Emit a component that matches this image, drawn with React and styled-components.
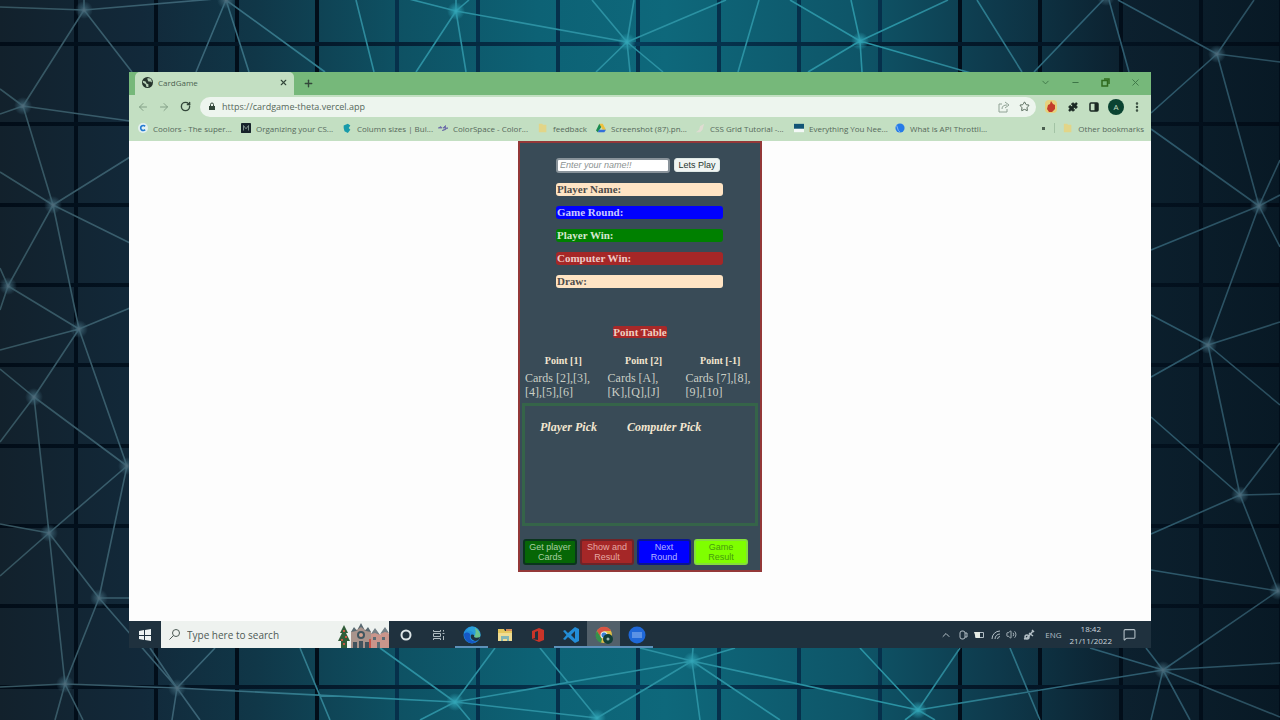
import React from "react";
import styled, { createGlobalStyle } from "styled-components";
import {
  ArrowLeft, ArrowRight, RotateCw, Lock, X, Plus, ChevronDown, ChevronUp, Minus, Copy,
  Star, Puzzle, EllipsisVertical, Search, MessageSquare, Volume2,
} from "lucide-react";

const Global = createGlobalStyle`
  * { box-sizing: border-box; }
  body { margin: 0; background: #0b1f2e; font-family: "Open Sans", "Noto Sans", sans-serif; }
  button, input { font-family: inherit; }
  button { cursor: pointer; }
`;

/* ---------- backdrop ---------- */

const Page = styled.div`
  position: relative;
  display: flex;
  flex-direction: column;
  min-height: 100vh;
  padding: 72px 129px;
`;

const BackdropSvg = styled.svg`
  position: absolute;
  inset: 0;
  width: 100%;
  height: 100%;
`;

const NODES = [
  [84, 10], [23, 106], [53, 205], [8, 286], [79, 329], [34, 397], [127, 466], [49, 533], [99, 598], [65, 684],
  [226, 0], [456, 11], [627, 42], [860, 41], [1106, -3], [1217, 54], [1259, 206], [1208, 345], [1240, 495],
  [1278, 591], [1163, 670], [177, 688], [455, 702], [692, 661], [597, 718], [918, 710],
];

const LINKS =
  "M84 10L0 7M84 10L226 -2M84 10V0M84 10L23 106M84 10L132 72M23 106L0 89M23 106L0 114M23 106L130 121M23 106L53 205" +
  "M53 205L0 172M53 205L130 157M53 205L130 243M53 205L8 286M53 205L79 329M8 286L0 268M8 286L0 310M8 286L79 329" +
  "M79 329L0 350M79 329L130 308M79 329L34 397M79 329L127 466M34 397L0 369M34 397L0 442M34 397L127 466M34 397L49 533" +
  "M127 466L49 533M127 466L99 598M49 533L0 524M49 533L0 576M49 533L99 598M49 533L65 684M99 598H130M99 598L65 684" +
  "M99 598L177 688M65 684L0 687M65 684L55 720M65 684L83 720M65 684L177 688" +
  "M226 0L196 72M226 0L249 72M226 0L325 72M356 0L374 72M456 11L409 -1M456 11L469 0M456 11V0M456 11L416 72M456 11L466 72" +
  "M456 11L627 42M627 42L592 0M627 42L634 0M627 42L596 72M627 42L630 72M627 42L726 0M627 42L663 72M759 0L738 72" +
  "M860 41L790 0M860 41L851 0M860 41L948 0M860 41L808 72M860 41L862 72M860 41L995 80M977 0L1022 72M1106 -3L1034 72" +
  "M1109 0L1129 72M1217 54L1118 0M1217 54L1254 0M1217 54L1280 62M1217 54L1151 113M1217 54L1259 206M1151 129L1259 206" +
  "M1259 206L1280 160M1259 206L1280 195M1259 206L1280 247M1259 206L1151 250M1259 206L1208 345M1208 345L1280 322" +
  "M1208 345L1280 405M1208 345L1151 315M1208 345L1151 377M1208 345L1240 495M1240 495L1280 443M1240 495L1280 494" +
  "M1240 495L1151 534M1240 495L1278 591M1240 495L1151 417M1278 591L1151 570M1278 591L1163 670M1163 670L1280 663" +
  "M1163 670L1280 717M1163 670L1146 648M1163 670L1151 720M1163 670L1190 720M1163 670L918 710M1163 670L1090 648" +
  "M177 688L150 648M177 688L215 648M177 688L172 720M177 688L200 720M177 688L455 702M455 702L380 648M455 702L495 648" +
  "M455 702L420 720M455 702L470 720M455 702L597 718M455 702L692 661M597 718L540 648M692 661L597 718M692 661L640 648" +
  "M692 661L693 648M692 661L735 648M692 661L700 720M692 661L780 720M692 661L918 710M918 710L860 648M918 710L960 648" +
  "M918 710L905 720M918 710L935 720M300 648L330 720M1010 648L1040 720";

const grid = (from, count) => Array.from({ length: count }, (_, i) => Math.round(from + i * 80.35));

function Backdrop() {
  return (
    <BackdropSvg viewBox="0 0 1280 720" preserveAspectRatio="xMidYMid slice" aria-hidden="true">
      <defs>
        <linearGradient id="base">
          <stop offset="0" stopColor="#12212c" />
          <stop offset="0.11" stopColor="#12293a" />
          <stop offset="0.2" stopColor="#103748" />
          <stop offset="0.31" stopColor="#0e5163" />
          <stop offset="0.42" stopColor="#0d6275" />
          <stop offset="0.52" stopColor="#0e687b" />
          <stop offset="0.67" stopColor="#0e5568" />
          <stop offset="0.78" stopColor="#0e394b" />
          <stop offset="0.88" stopColor="#0c202e" />
          <stop offset="1" stopColor="#081925" />
        </linearGradient>
        <linearGradient id="seam">
          <stop offset="0" stopColor="#020d18" />
          <stop offset="0.25" stopColor="#04192a" />
          <stop offset="0.5" stopColor="#063b58" />
          <stop offset="0.75" stopColor="#04192a" />
          <stop offset="1" stopColor="#020c17" />
        </linearGradient>
        <linearGradient id="wire" gradientUnits="userSpaceOnUse" x1="0" x2="1280">
          <stop offset="0" stopColor="#35545f" />
          <stop offset="0.15" stopColor="#3b6375" />
          <stop offset="0.3" stopColor="#2c8fa1" />
          <stop offset="0.7" stopColor="#2a93a4" />
          <stop offset="0.85" stopColor="#2f6074" />
          <stop offset="1" stopColor="#2a4d5d" />
        </linearGradient>
        <radialGradient id="glowEdge">
          <stop offset="0" stopColor="#55707f" stopOpacity="0.95" />
          <stop offset="0.4" stopColor="#3d6475" stopOpacity="0.6" />
          <stop offset="1" stopColor="#3d6475" stopOpacity="0" />
        </radialGradient>
        <radialGradient id="glowMid">
          <stop offset="0" stopColor="#35a9ba" />
          <stop offset="0.4" stopColor="#2a98aa" stopOpacity="0.7" />
          <stop offset="1" stopColor="#2a98aa" stopOpacity="0" />
        </radialGradient>
      </defs>
      <rect width="1280" height="720" fill="url(#base)" />
      {grid(76, 16).map((x) => <rect key={x} x={x - 2} y="0" width="4" height="720" fill={x > 350 && x < 930 ? "#06304b" : "#020e1a"} />)}
      {grid(44, 9).map((y) => <rect key={y} x="0" y={y - 2} width="1280" height="4" fill="url(#seam)" />)}
      <path d={LINKS} stroke="url(#wire)" strokeWidth="1.6" fill="none" />
      {NODES.map(([x, y]) => <circle key={x} cx={x} cy={y} r="9" fill={x > 350 && x < 1000 ? "url(#glowMid)" : "url(#glowEdge)"} />)}
    </BackdropSvg>
  );
}

/* ---------- browser ---------- */

const Desktop = styled.main`
  position: relative;
  flex: 1;
  display: flex;
  flex-direction: column;
`;

const IconButton = styled.button`
  display: grid;
  place-items: center;
  width: ${(p) => p.$w || 16}px;
  height: 16px;
  padding: 0;
  border: 0;
  background: none;
  color: ${(p) => p.$color || "#33473a"};
`;

const TabStrip = styled.div`
  display: flex;
  align-items: stretch;
  height: 23px;
  padding-left: 6px;
  background: #76b87a;
`;

const Tab = styled.div`
  display: flex;
  align-items: center;
  gap: 5px;
  width: 159px;
  padding: 0 3px 2px 7px;
  border-radius: 5px 5px 0 0;
  background: #c3dfc2;
  color: #4b5f50;
  font-size: 8px;
  span { flex: 1; }
`;

const WindowButtons = styled.div`
  display: flex;
  align-items: center;
  gap: 14px;
  margin-left: auto;
  padding: 0 8px 2px 0;
`;

const NewTab = styled(IconButton)`
  align-self: center;
  margin-left: 6px;
`;

const Toolbar = styled.div`
  display: flex;
  align-items: center;
  gap: 5px;
  height: 23px;
  padding: 0 6px;
  background: #c3dfc2;
`;

const AddressBar = styled.label`
  flex: 1;
  display: flex;
  align-items: center;
  gap: 6px;
  height: 20px;
  margin-left: 2px;
  padding: 0 4px 0 8px;
  border-radius: 10px;
  background: #edf5ee;
  color: #33473a;
`;

const Address = styled.input`
  flex: 1;
  min-width: 0;
  padding: 0;
  border: 0;
  outline: 0;
  background: none;
  color: #55685b;
  font-size: 9px;
`;

const Bookmarks = styled.nav`
  display: flex;
  align-items: center;
  height: 23px;
  padding: 0 7px 3px 9px;
  background: #c3dfc2;
`;

const Bookmark = styled.a`
  display: flex;
  align-items: center;
  gap: 5px;
  width: ${(p) => (p.$w ? `${p.$w}px` : "auto")};
  color: #56695b;
  font-size: 8px;
  text-decoration: none;
  white-space: nowrap;
  svg { flex: none; }
`;

const Overflow = styled.div`
  display: flex;
  align-items: center;
  gap: 8px;
  margin-left: auto;
`;

const Divider = styled.span`
  width: 1px;
  height: 10px;
  background: #a3c3a5;
`;

const Viewport = styled.section`
  flex: 1;
  display: flex;
  justify-content: center;
  align-items: flex-start;
  background: #fdfdfd;
`;

const Folder = () => <path d="M1 1h4l1 1h4v9H1z" fill="#e2d588" />;

const BOOKMARKS = [
  ["Coolors - The super...", 103, <><circle cx="6" cy="6" r="6" fill="#e4f1f0" /><path d="M8.500 4A3 3 0 1 0 8.500 8" stroke="#247bd2" strokeWidth="2" fill="none" /></>],
  ["Organizing your CS...", 101, <><rect width="12" height="12" rx="1" fill="#17232b" /><path d="M3 9V3l3 4 3-4v6" stroke="#8ea19b" fill="none" /></>],
  ["Column sizes | Bul...", 96, <path d="M2 3l5-2 3 2-2 3 2 2-3 4-4-2-1-4z" fill="#189baa" />],
  ["ColorSpace - Color...", 100, <><path d="M0 6h5l-2-2M12 6H6l3-3v5L5 9z" fill="#6d6da8" stroke="#6d6da8" /></>],
  ["feedback", 58, <Folder />],
  ["Screenshot (87).pn...", 99, <><path d="M4 1L0 9l2 2 5-7z" fill="#198b50" /><path d="M4 1h4l4 7H8z" fill="#ecc13f" /><path d="M2 11l2-3h8l-2 3z" fill="#326fda" /></>],
  ["CSS Grid Tutorial -...", 99, <path d="M1 11l4-3 1-4 5-3-2 7-3 3z" fill="#dfdcd2" />],
  ["Everything You Nee...", 101, <><path d="M0 1h12v6H0z" fill="#125476" /><path d="M0 7h12v4H0z" fill="#f3f8f6" /></>],
  ["What is API Throttli...", 0, <><circle cx="6" cy="6" r="5.500" fill="#267be8" /><path d="M2 3l2 6 2 2" stroke="#9cc6f4" fill="none" /></>],
];

/* ---------- game ---------- */

const Game = styled.article`
  width: 244px;
  padding: 14px 2px 5px;
  border: 2px solid #943838;
  background: #394b57;
  color: #f3e6d0;
  font-family: "Liberation Serif", serif;
`;

const GameTop = styled.div`
  display: flex;
  flex-direction: column;
  gap: 10px;
  padding: 0 34px;
`;

const NameForm = styled.form`
  display: flex;
  align-items: center;
  gap: 4px;
  height: 16px;
`;

const NameInput = styled.input`
  width: 114px;
  height: 15px;
  padding: 0 2px;
  border: 2px solid #89939a;
  border-radius: 3px;
  background: #fff;
  font: 9px "Liberation Sans", sans-serif;
  &::placeholder { color: #8b9291; font-style: italic; }
`;

const PlayButton = styled.button`
  width: 46px;
  height: 14px;
  padding: 0;
  border: 1px solid #dfe8e5;
  border-radius: 3px;
  background: #f0f5f3;
  color: #26352f;
  font: 9px "Liberation Sans", sans-serif;
`;

const Score = styled.div`
  width: 167px;
  height: 13px;
  padding-left: 1px;
  border-radius: 3px;
  background: ${(p) => p.$bg};
  color: ${(p) => p.$color || "#e6d9dd"};
  font-size: 11px;
  font-weight: bold;
  line-height: 13px;
`;

const PointTitle = styled.h2`
  width: max-content;
  margin: 38px auto 14px;
  border-radius: 2px;
  background: #a82828;
  color: #efcfc0;
  font-size: 11px;
  line-height: 12px;
`;

const PointTable = styled.table`
  width: 100%;
  table-layout: fixed;
  border-collapse: collapse;
  font-size: 12px;
  line-height: 14px;
  color: #cbcfc6;
  th { padding: 2px 0 3px; font-size: 10px; color: #f3e6d0; }
  td { padding: 0 3px; vertical-align: top; }
  th:first-child { width: 35%; }
  th:nth-child(2) { width: 33%; }
`;

const PickArea = styled.div`
  display: flex;
  gap: 30px;
  height: 123px;
  margin-top: 4px;
  padding: 14px 15px;
  border: 3px solid #356449;
  h3 { margin: 0; font-size: 12px; font-style: italic; line-height: 14px; }
`;

const Actions = styled.div`
  display: flex;
  gap: 3px;
  margin-top: 13px;
  padding-left: 1px;
`;

const Action = styled.button`
  width: 54px;
  height: 26px;
  padding: 0 4px;
  border: 2px solid ${(p) => p.$edge};
  border-radius: 3px;
  background: ${(p) => p.$bg};
  color: ${(p) => p.$color};
  font: 9px/10px "Liberation Sans", sans-serif;
`;

/* ---------- taskbar ---------- */

const Taskbar = styled.footer`
  display: flex;
  height: 27px;
  background: #1f313e;
`;

const Task = styled.button`
  display: grid;
  place-items: center;
  width: ${(p) => p.$w || 33}px;
  padding: 0;
  border: 0;
  background: ${(p) => (p.$active ? "#52606a" : "none")};
  box-shadow: inset 0 -2px ${(p) => (p.$open ? "#5d91b9" : "transparent")};
`;

const SearchBox = styled.label`
  display: flex;
  align-items: center;
  gap: 7px;
  width: 228px;
  padding-left: 8px;
  background: #eef2ef;
  color: #4d5a55;
`;

const SearchInput = styled.input`
  flex: 1;
  min-width: 0;
  padding: 0;
  border: 0;
  background: none;
  font-size: 10px;
  &::placeholder { color: #4d5a55; opacity: 1; }
`;

const Tray = styled.div`
  display: flex;
  align-items: center;
  gap: 6px;
  margin-left: auto;
  padding-right: 15px;
  color: #b3bfc6;
  font-size: 8px;
`;

const Language = styled.span`
  padding: 0 2px 0 4px;
`;

const Clock = styled.time`
  padding-right: 5px;
  color: #ccd6dc;
  line-height: 12px;
  text-align: center;
`;

function Holiday() {
  return (
    <svg width="51" height="26" viewBox="0 0 51 26" aria-hidden="true">
      <path d="M6 3l4 8-2 0 4 8H9v7H3v-7H0l4-8H2z" fill="#315c38" />
      <path d="M5 8h2v2H5zM7 14h2v2H7zM3 17h2v2H3zM5 21h2v2H5z" fill="#c9553f" />
      <path d="M13 26V10l3-4 3 2 4-6 4 6 3-2 3 4v16z" fill="#a9948c" />
      <path d="M13 10l3-5 3 4 4-8 4 8 3-4 3 5-5-1-5-4-5 4z" fill="#596b73" />
      <circle cx="23" cy="13" r="4" fill="#3f5660" /><circle cx="23" cy="13" r="2" fill="#d3a391" />
      <path d="M15 20h4v6h-4zM21 19h4v7h-4zM27 20h4v6h-4z" fill="#40525d" />
      <path d="M33 12l4-5 5 6 5-7 4 6v14H33z" fill="#c9958b" />
      <path d="M33 12l4-6 5 7-5-2zM42 12l5-7 4 6-4-1z" fill="#748187" />
      <path d="M35 15h3v3h-3zM44 15h3v3h-3zM39 20h3v6h-3z" fill="#596b73" />
      <path d="M31 17h2v9h-2z" fill="#c75549" />
    </svg>
  );
}

const APPS = [
  ["Cortana", 0, 0, <circle cx="9" cy="9" r="4.500" fill="none" stroke="#dce4e6" strokeWidth="2" />],
  ["Task view", 0, 0, <path d="M3.500 4v1.500h7V4M3.500 14v-1.500h7V14M3.500 7.500h7v3h-7zM13.500 4v1.500M13.500 10v4M12.500 7.500h2" fill="none" stroke="#aebbc1" />],
  ["Edge", 1, 0, <><circle cx="9" cy="9" r="8.500" fill="#228edb" /><path d="M9 .5a8.500 8.500 0 0 1 8.500 8.500c0 3-4 4-7 2 2-4-2-7-7-6A8 8 0 0 1 9 .5z" fill="#2b9fd8" /><path d="M12 2c4 2 6 6 5 9-2 2-5 1-6 0 2-3 2-6 1-9z" fill="#6cc48d" /><path d="M1 8c3-3 7-1 6 2-1 3 2 6 7 5-5 5-13 1-13-7z" fill="#1557c4" /><path d="M8 9c2-1 4 0 3 2 1 1 4 1 6 0-1 3-3 4-5 4-3-1-5-3-4-6z" fill="#1f313e" /></>],
  ["File Explorer", 0, 0, <><path d="M2 3h6l1 2h7v10H2z" fill="#e6c75e" /><path d="M2 7h14v8H2z" fill="#f0dc91" /><path d="M5 10h8v5h-2v-2H7v2H5z" fill="#83b5b5" /><path d="M10 3h6v2h-6z" fill="#d28a5a" /></>],
  ["Office", 0, 0, <path fillRule="evenodd" d="M3 5l7-3 5 2v10l-5 2-7-3 6 1V5L6 6v6l-3 1z" fill="#c93429" />],
  ["Visual Studio Code", 1, 0, <path fillRule="evenodd" d="M13 1l4 2v12l-4 2-7-6-3 3-2-1 3.500-4L1 5l2-1 3 3zM13 5L9 9l4 4z" fill="#238dd7" />],
  ["Chrome", 1, 1, <><circle cx="9" cy="9" r="8" fill="#e0be44" /><path d="M2 5a8 8 0 0 1 14 0H9L5 10z" fill="#d85343" /><path d="M2 5l5 8-1 4A8 8 0 0 1 2 5z" fill="#36904c" /><circle cx="9" cy="9" r="3.500" fill="#e8edf0" /><circle cx="9" cy="9" r="2.500" fill="#397fd3" /><circle cx="13" cy="13" r="5" fill="#123f37" /><circle cx="13" cy="13" r="1.500" fill="#9fb9b1" /></>],
  ["Zoom", 1, 0, <><circle cx="9" cy="9" r="8.500" fill="#1f68d8" /><path d="M4 6h10v6H4z" fill="#5b92e5" /></>],
];

const SCORES = [
  ["Player Name:", "#ffe4c4", "#4d4c4a"],
  ["Game Round:", "#0000ff", "#c9c9ff"],
  ["Player Win:", "#008000", "#d6e8cf"],
  ["Computer Win:", "#a52727", "#efc9c5"],
  ["Draw:", "#ffe4c4", "#4d4c4a"],
];

export default function App() {
  return (
    <Page>
      <Global />
      <Backdrop />
      <Desktop>
        <TabStrip>
          <Tab>
            <svg width="11" height="11" viewBox="0 0 12 12" aria-hidden="true">
              <circle cx="6" cy="6" r="6" fill="#26352d" />
              <path d="M1 4l3 1 1 2 2 1v3l-2 0-1-3-3-2zM6 1l4 1 1 4-2-1-2 0-1-2z" fill="#b6d0b7" />
            </svg>
            <span>CardGame</span>
            <IconButton aria-label="Close tab"><X size={9} strokeWidth={3} /></IconButton>
          </Tab>
          <NewTab aria-label="New tab"><Plus size={11} strokeWidth={3} /></NewTab>
          <WindowButtons>
            <IconButton aria-label="Search tabs"><ChevronDown size={11} color="#3d7547" /></IconButton>
            <IconButton aria-label="Minimize"><Minus size={9} color="#3d7547" strokeWidth={3} /></IconButton>
            <IconButton aria-label="Restore">
              <svg width="9" height="9" viewBox="0 0 9 9" fill="none" stroke="#2f6a1e" strokeWidth="1.500"><rect x="1" y="2.500" width="5.500" height="5.500" /><path d="M3 1h5v5" /></svg>
            </IconButton>
            <IconButton aria-label="Close"><X size={11} color="#3d7547" /></IconButton>
          </WindowButtons>
        </TabStrip>
        <Toolbar>
          <IconButton aria-label="Back" $color="#83a087"><ArrowLeft size={12} /></IconButton>
          <IconButton aria-label="Forward" $color="#83a087"><ArrowRight size={12} /></IconButton>
          <IconButton aria-label="Reload"><RotateCw size={11} strokeWidth={3} /></IconButton>
          <AddressBar>
            <svg width="8" height="9" viewBox="0 0 8 9" aria-hidden="true"><path d="M1 4h6v4H1z" fill="#33473a" /><path d="M2.500 4V2.500a1.500 1.500 0 0 1 3 0V4" fill="none" stroke="#33473a" /></svg>
            <Address aria-label="Address" defaultValue="https://cardgame-theta.vercel.app" />
            <svg width="12" height="12" viewBox="0 0 12 12" fill="none" stroke="#90a295" aria-hidden="true"><path d="M4 3H1v8h8V8" /><path d="M4 8c0-3 2-4 5-4M7 1l4 3-4 3" /></svg>
            <IconButton as="span" $color="#4b5f50"><Star size={11} /></IconButton>
          </AddressBar>
          <IconButton aria-label="Extension" $w={19}>
            <svg width="12" height="13" viewBox="0 0 12 13"><rect width="12" height="13" rx="4" fill="#e6d27d" /><path d="M3 5l2-1 1-3 2 3 2 1v4l-3 3H4L2 9z" fill="#c33d2b" /></svg>
          </IconButton>
          <IconButton aria-label="Extensions" $color="#1a2823"><Puzzle size={10} fill="#1a2823" /></IconButton>
          <IconButton aria-label="Side panel">
            <svg width="10" height="10" viewBox="0 0 10 10"><rect x="1" y="1" width="8" height="8" rx="1" fill="none" stroke="#1a2823" strokeWidth="1.500" /><path d="M5.500 1H9v8H5.500z" fill="#1a2823" /></svg>
          </IconButton>
          <IconButton aria-label="Profile" $w={17}>
            <svg width="16" height="16" viewBox="0 0 16 16"><circle cx="8" cy="8" r="8" fill="#0a4331" /><text x="8" y="11" textAnchor="middle" fontSize="8" fill="#c3dfc2">A</text></svg>
          </IconButton>
          <IconButton aria-label="Menu"><EllipsisVertical size={12} strokeWidth={3} /></IconButton>
        </Toolbar>
        <Bookmarks aria-label="Bookmarks">
          {BOOKMARKS.map(([label, w, icon]) => (
            <Bookmark key={label} href="#" $w={w}>
              <svg width="10" height="10" viewBox="0 0 12 12" aria-hidden="true">{icon}</svg>
              {label}
            </Bookmark>
          ))}
          <Overflow>
            <svg width="5" height="5" viewBox="0 0 5 5" aria-hidden="true"><path d="M1 1h3v3H1z" fill="#4b5f50" /></svg>
            <Divider />
            <Bookmark href="#">
              <svg width="10" height="10" viewBox="0 0 12 12" aria-hidden="true"><Folder /></svg>
              Other bookmarks
            </Bookmark>
          </Overflow>
        </Bookmarks>

        <Viewport>
          <Game>
            <GameTop>
              <NameForm onSubmit={(e) => e.preventDefault()}>
                <NameInput aria-label="Your name" placeholder="Enter your name!!" />
                <PlayButton>Lets Play</PlayButton>
              </NameForm>
              {SCORES.map(([label, bg, color]) => <Score key={label} $bg={bg} $color={color}>{label}</Score>)}
            </GameTop>
            <PointTitle>Point Table</PointTitle>
            <PointTable>
              <thead><tr><th>Point [1]</th><th>Point [2]</th><th>Point [-1]</th></tr></thead>
              <tbody>
                <tr>
                  <td>Cards [2],[3],<br />[4],[5],[6]</td>
                  <td>Cards [A],<br />[K],[Q],[J]</td>
                  <td>Cards [7],[8],<br />[9],[10]</td>
                </tr>
              </tbody>
            </PointTable>
            <PickArea><h3>Player Pick</h3><h3>Computer Pick</h3></PickArea>
            <Actions>
              <Action $bg="#066606" $edge="#0a351d" $color="#a9cfa3">Get player Cards</Action>
              <Action $bg="#a52727" $edge="#6e2428" $color="#e6aaa3">Show and Result</Action>
              <Action $bg="#0000ff" $edge="#0a1690" $color="#b3b3ff">Next Round</Action>
              <Action $bg="#7fff00" $edge="#84de3c" $color="#469c0e">Game Result</Action>
            </Actions>
          </Game>
        </Viewport>

        <Taskbar>
          <Task aria-label="Start" $w={32}>
            <svg width="12" height="12" viewBox="0 0 12 12"><path d="M0 2l5-1v5H0zM6 1l6-1v6H6zM0 7h5v4l-5-1zM6 7h6v5l-6-1z" fill="#edf2f2" /></svg>
          </Task>
          <SearchBox>
            <svg width="11" height="11" viewBox="0 0 11 11" fill="none" stroke="#4d5a55" aria-hidden="true"><circle cx="7" cy="4" r="3.500" /><path d="M4.500 6.500L.5 10.500" /></svg>
            <SearchInput aria-label="Search" placeholder="Type here to search" />
            <Holiday />
          </SearchBox>
          {APPS.map(([name, open, active, icon]) => (
            <Task key={name} aria-label={name} $open={open} $active={active}>
              <svg width="18" height="18" viewBox="0 0 18 18" aria-hidden="true">{icon}</svg>
            </Task>
          ))}
          <Tray>
            <ChevronUp size={12} />
            <svg width="10" height="10" viewBox="0 0 10 10" fill="none" stroke="currentColor"><rect x="2" y="1" width="5" height="8" rx="2" /><path d="M7 3h2v4H7" /></svg>
            <svg width="11" height="8" viewBox="0 0 11 8"><path d="M1.500 1.500h8v5h-8z" fill="none" stroke="currentColor" /><path d="M0 1h6v6H2z" fill="#e5ebe4" /></svg>
            <svg width="9" height="10" viewBox="0 0 9 10" fill="none" stroke="currentColor"><path d="M1 9A8 8 0 0 1 9 1M4 9a5 5 0 0 1 5-5M6.500 9A3 3 0 0 1 9 6.500" /></svg>
            <Volume2 size={11} />
            <svg width="12" height="12" viewBox="0 0 12 12" fill="none" stroke="currentColor" strokeWidth="1.500"><path d="M1 10l3-1 6-7M6 4l4 3M9 1l2 2" /><circle cx="4" cy="8" r="2" /></svg>
            <Language>ENG</Language>
            <Clock>18:42<br />21/11/2022</Clock>
            <MessageSquare size={13} />
          </Tray>
        </Taskbar>
      </Desktop>
    </Page>
  );
}
